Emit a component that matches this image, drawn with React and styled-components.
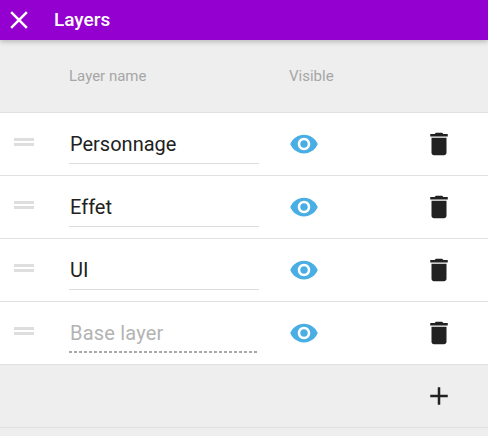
import styled, { createGlobalStyle } from 'styled-components';

const GlobalStyle = createGlobalStyle`
html, body {
  margin: 0;
  padding: 0;
  background: #eeeeee;
  font-family: Roboto, "Liberation Sans", sans-serif;
}
`

const layers = [
    { name: 'Personnage' },
    { name: 'Effet' },
    { name: 'UI' },
    { name: '', placeholder: 'Base layer' },
]

const Icon = ({ d, color, size = 30 }) => (
    <svg width={size} height={size} viewBox="0 0 24 24" fill={color}>
        <path d={d} />
    </svg>
)

const CLOSE = 'M19 6.41 17.59 5 12 10.59 6.41 5 5 6.41 10.59 12 5 17.59 6.41 19 12 13.41 17.59 19 19 17.59 13.41 12z'
const EYE = 'M12 4.5C7 4.5 2.73 7.61 1 12c1.73 4.39 6 7.5 11 7.5s9.27-3.11 11-7.5c-1.73-4.39-6-7.5-11-7.5zM12 17c-2.76 0-5-2.24-5-5s2.24-5 5-5 5 2.24 5 5-2.24 5-5 5zm0-8c-1.66 0-3 1.34-3 3s1.34 3 3 3 3-1.34 3-3-1.34-3-3-3z'
const TRASH = 'M6 19c0 1.1.9 2 2 2h8c1.1 0 2-.9 2-2V7H6v12zM19 4h-3.5l-1-1h-5l-1 1H5v2h14V4z'
const PLUS = 'M19 13h-6v6h-2v-6H5v-2h6V5h2v6h6v2z'

export default function App() {
    return (
        <>
            <GlobalStyle />
            <Page>
                <Topo>
                    <IconButton><Icon d={CLOSE} color="#ffffff" /></IconButton>
                    <h1>Layers</h1>
                </Topo>
                <Cabecalho>
                    <span>Layer name</span>
                    <span>Visible</span>
                </Cabecalho>
                {layers.map((layer, i) => (
                    <Linha key={i}>
                        <Handle />
                        <NameInput
                            readOnly
                            value={layer.name}
                            placeholder={layer.placeholder}
                            $empty={!layer.name}
                        />
                        <IconButton><Icon d={EYE} color="#48aee3" /></IconButton>
                        <IconButton><Icon d={TRASH} color="#212121" /></IconButton>
                    </Linha>
                ))}
                <Rodape>
                    <IconButton><Icon d={PLUS} color="#212121" /></IconButton>
                </Rodape>
            </Page>
        </>
    )
}

const Page = styled.div`
width: 488px;
height: 436px;
background: #eeeeee;
overflow: hidden;
`
const Topo = styled.div`
display: flex;
align-items: center;
gap: 20px;
height: 40px;
padding-left: 4px;
background: #9400d0;
box-shadow: 0 2px 5px rgba(0, 0, 0, 0.22);
position: relative;

h1 {
margin: -2px 0 0;
color: white;
font-size: 19px;
font-weight: 500;
}
`
const IconButton = styled.div`
display: flex;
width: 30px;
height: 30px;
`
const Cabecalho = styled.div`
display: grid;
grid-template-columns: 220px 1fr;
align-items: center;
height: 73px;
padding-left: 69px;
padding-bottom: 1px;
box-sizing: border-box;
color: #a6a6a6;
font-size: 15px;
border-bottom: 1px solid #e0e0e0;
`
const Linha = styled.div`
display: grid;
grid-template-columns: 55px 220px 135px 30px;
align-items: center;
height: 63px;
box-sizing: border-box;
padding-left: 14px;
background: white;
border-bottom: 1px solid #e0e0e0;
`
const Handle = styled.div`
width: 20px;
height: 2px;
margin-top: -5px;
border-top: 3px solid #dedede;
border-bottom: 3px solid #dedede;
`
const NameInput = styled.input`
width: 190px;
height: 39px;
box-sizing: border-box;
padding: 0 0 ${props => (props.$empty ? '1px' : '0')} 1px;
margin: 0;
border: none;
border-radius: 0;
outline: none;
font-family: Roboto, "Liberation Sans", sans-serif;
font-size: 20px;
color: #212121;
border-bottom: ${props => (props.$empty ? 'none' : '1px solid #dddddd')};
background: ${props => (props.$empty
        ? 'repeating-linear-gradient(90deg, #a8a8a8 0 3px, transparent 3px 5px) left bottom / 100% 2px no-repeat'
        : 'transparent')};

&::placeholder {
color: #b3b3b3;
letter-spacing: 0.2px;
opacity: 1;
}
`
const Rodape = styled.div`
display: flex;
justify-content: flex-end;
align-items: center;
height: 63px;
box-sizing: border-box;
padding-right: 34px;
border-bottom: 1px solid #e0e0e0;
`
